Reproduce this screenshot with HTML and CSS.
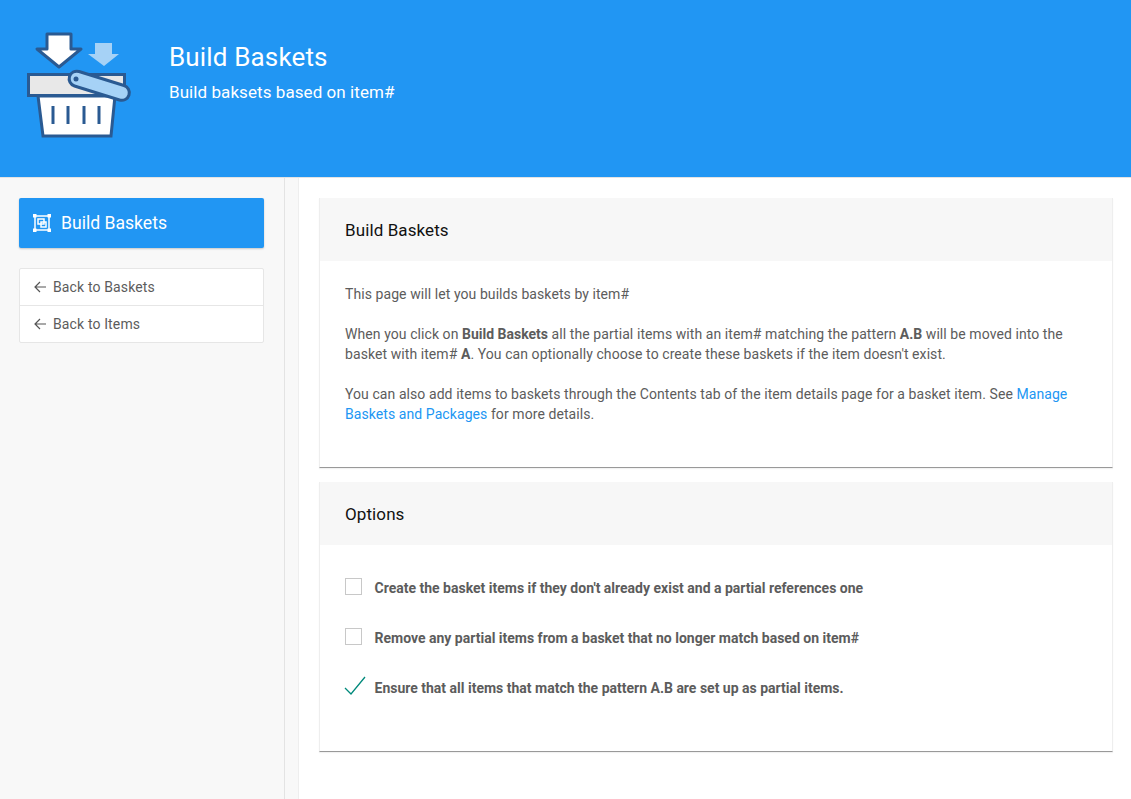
FILE: index.html
```html
<!DOCTYPE html>
<html lang="en">
<head>
    <meta charset="UTF-8">
    <meta name="viewport" content="width=device-width, initial-scale=1.0">
    <title>Build Baskets</title>
    <link rel="stylesheet" href="styles.css">
</head>
<body>
    <header class="header">
        <svg class="header-icon" width="110" height="112" viewBox="24 28 110 112">
            <path d="M95 43h17v11h7l-15 12-16-12h7z" fill="#a6d2f6"/>
            <path d="M47 34h24v15h10L59 67 37 49h10z" fill="#fff" stroke="#2a5a92" stroke-width="3" stroke-linejoin="round"/>
            <path d="M38 96h77l-4 40H43z" fill="#fff" stroke="#2a5a92" stroke-width="3"/>
            <path d="M28.500 74.500h96v21h-96z" fill="#e8e8e8" stroke="#2a5a92" stroke-width="3"/>
            <path d="M53 106v18M68 106v18M84 106v18M99 106v18" stroke="#2a5a92" stroke-width="3" fill="none"/>
            <path d="M79 71.500l45 14a7.500 7.500 0 0 1-4.500 14.500l-45-14a7.500 7.500 0 0 1 4.500-14.500z" fill="#a6d2f6" stroke="#2a5a92" stroke-width="3"/>
            <circle cx="76" cy="79" r="2.500" fill="#2a5a92"/>
        </svg>
        <div>
            <h1>Build Baskets</h1>
            <p>Build baksets based on item#</p>
        </div>
    </header>
    <div class="layout">
        <aside class="sidebar">
            <div class="sidebar-inner">
                <a class="nav-main" href="#">
                    <svg width="18" height="18" viewBox="0 0 18 18" fill="none" stroke="#fff">
                        <path d="M2 2h14v14H2z" stroke-width="1.500"/>
                        <path d="M0 0h3.500v3.500H0zM14.500 0H18v3.500h-3.500zM0 14.500h3.500V18H0zM14.500 14.500H18V18h-3.500z" fill="#fff" stroke="none"/>
                        <path d="M5 5h6v5H5zM8 8h5v5H8z" stroke-width="1.500"/>
                    </svg>
                    Build Baskets
                </a>
                <ul class="nav-links">
                    <li><a href="#"><svg class="arrow" width="12" height="12" viewBox="0 0 12 12" fill="none" stroke="#555" stroke-width="1.200"><path d="M12 6H1M6 1L1 6l5 5"/></svg>Back to Baskets</a></li>
                    <li><a href="#"><svg class="arrow" width="12" height="12" viewBox="0 0 12 12" fill="none" stroke="#555" stroke-width="1.200"><path d="M12 6H1M6 1L1 6l5 5"/></svg>Back to Items</a></li>
                </ul>
            </div>
        </aside>
        <main class="content">
            <section class="card">
                <h2>Build Baskets</h2>
                <div class="card-body">
                    <p>This page will let you builds baskets by item#</p>
                    <p>When you click on <strong>Build Baskets</strong> all the partial items with an item# matching the pattern <strong>A.B</strong> will be moved into the basket with item# <strong>A</strong>. You can optionally choose to create these baskets if the item doesn't exist.</p>
                    <p>You can also add items to baskets through the Contents tab of the item details page for a basket item. See <a href="#">Manage Baskets and Packages</a> for more details.</p>
                </div>
            </section>
            <section class="card">
                <h2>Options</h2>
                <div class="card-body options">
                    <label class="option"><span class="box"></span>Create the basket items if they don't already exist and a partial references one</label>
                    <label class="option"><span class="box"></span>Remove any partial items from a basket that no longer match based on item#</label>
                    <label class="option">
                        <svg class="check" width="22" height="20" viewBox="0 0 22 20" fill="none" stroke="#00897b" stroke-width="1.300"><path d="M1 12l6 6L21 1"/></svg>
                        Ensure that all items that match the pattern A.B are set up as partial items.
                    </label>
                </div>
            </section>
        </main>
    </div>
</body>
</html>
```

FILE: styles.css
```css
* {
    box-sizing: border-box;
}
body {
    margin: 0;
    font-family: Roboto, sans-serif;
    font-size: 14px;
    line-height: 20px;
    color: #5c5c5c;
    background: #fff;
}
a {
    text-decoration: none;
}
.header {
    height: 178px;
    background: #2196f3;
    color: #fff;
    display: flex;
    padding: 28px 0 0 24px;
    border-bottom: 1px solid #e3e3e3;
}
.header-icon {
    margin-right: 35px;
}
.header h1 {
    margin: 11px 0 0;
    font-size: 26px;
    line-height: 36px;
    font-weight: 400;
    letter-spacing: 0.15px;
}
.header p {
    margin: 6px 0 0;
    font-size: 17px;
    line-height: 22px;
    letter-spacing: 0.07px;
}
.layout {
    display: flex;
    min-height: 621px;
}
.sidebar {
    width: 299px;
    padding-right: 13px;
    background: #f8f8f8;
    border-right: 1px solid #eee;
}
.sidebar-inner {
    height: 100%;
    padding: 20px 20px 0 19px;
    border-right: 1px solid #e3e3e3;
}
.nav-main {
    display: flex;
    align-items: center;
    gap: 10px;
    height: 50px;
    padding-left: 14px;
    background: #2196f3;
    color: #fff;
    font-size: 17.600px;
    border-radius: 2px;
    box-shadow: 0 1px 2px rgba(0, 0, 0, 0.2);
}
.nav-links {
    list-style: none;
    margin: 20px 0 0;
    padding: 0;
    background: #fff;
    border: 1px solid #e6e6e6;
    border-radius: 2px;
}
.nav-links li + li {
    border-top: 1px solid #e6e6e6;
}
.nav-links a {
    display: flex;
    align-items: center;
    height: 36px;
    padding-left: 14px;
    color: #5c5c5c;
    letter-spacing: 0.13px;
}
.arrow {
    margin: -1px 7px 0 0;
}
.content {
    flex: 1;
    padding: 20px 18px 0 20px;
}
.card {
    border-left: 1px solid #eee;
    border-right: 1px solid #eee;
    border-bottom: 1px solid #999;
    margin-bottom: 14px;
    box-shadow: 0 1px 1px rgba(0, 0, 0, 0.05);
}
.card h2 {
    margin: 0;
    height: 63px;
    padding: 1px 25px 0;
    background: #f7f7f7;
    color: #111;
    font-size: 17px;
    font-weight: 400;
    line-height: 63px;
    letter-spacing: 0.1px;
}
.card-body {
    padding: 23px 25px 23px;
    letter-spacing: 0.075px;
}
.card-body p {
    margin: 0 0 20px;
}
.card-body a {
    color: #2196f3;
}
.card-body strong {
    letter-spacing: 0;
}
.options {
    padding: 33px 25px 53px;
    display: flex;
    flex-direction: column;
    gap: 30px;
    letter-spacing: 0;
}
.option {
    display: flex;
    align-items: center;
    min-height: 20px;
    font-weight: 700;
}
.box {
    width: 17px;
    height: 17px;
    margin: -3px 12.500px 0 0;
    border: 1px solid #c8c8c8;
    background: #fff;
}
.check {
    margin: -4px 8.500px 0 -1px;
}
```
